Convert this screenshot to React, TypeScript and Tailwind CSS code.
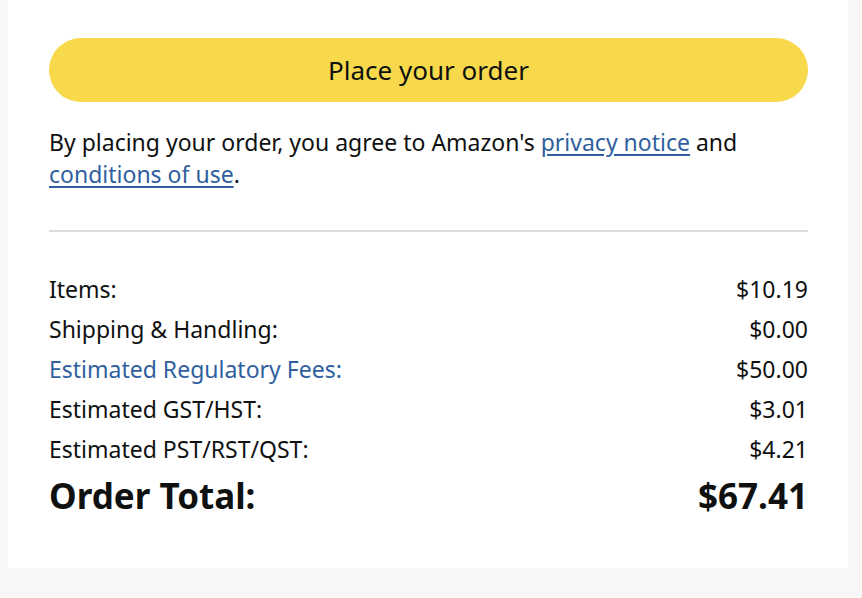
import React from "react";

const rows: { label: string; value: string; link?: boolean }[] = [
  { label: "Items:", value: "$10.19" },
  { label: "Shipping & Handling:", value: "$0.00" },
  { label: "Estimated Regulatory Fees:", value: "$50.00", link: true },
  { label: "Estimated GST/HST:", value: "$3.01" },
  { label: "Estimated PST/RST/QST:", value: "$4.21" },
];

export default function App() {
  return (
    <div
      className="w-[862px] h-[598px] bg-[#f7f7f7] pl-[8px] pr-[14px] overflow-hidden"
      style={{ fontFamily: '"Noto Sans", "Open Sans", Arial, sans-serif' }}
    >
      <div className="bg-white h-[568px] pl-[41px] pr-[32px] pt-[38px] text-[#0f1111]">
        <div className="w-[759px]">
          <button className="w-full h-[64px] rounded-full bg-[#f8d94c] text-[26px] text-[#0f1111] flex items-center justify-center">
            Place your order
          </button>
          <p className="mt-[24px] text-[23px] leading-[32px]">
            By placing your order, you agree to Amazon's{" "}
            <a className="text-[#2f5f9e] underline underline-offset-[3px]">privacy notice</a> and{" "}
            <a className="text-[#2f5f9e] underline underline-offset-[3px]">conditions of use</a>.
          </p>
          <div className="mt-[40px] h-[2px] bg-[#dcdcdc]" />
          <div className="mt-[37px] flex flex-col">
            {rows.map((r) => (
              <div key={r.label} className="flex justify-between text-[23px] h-[40px] items-center">
                <span className={r.link ? "text-[#2f5f9e]" : ""}>{r.label}</span>
                <span>{r.value}</span>
              </div>
            ))}
            <div className="flex justify-between text-[35px] font-bold h-[50px] items-center mt-[2px]">
              <span>Order Total:</span>
              <span>$67.41</span>
            </div>
          </div>
        </div>
      </div>
    </div>
  );
}
